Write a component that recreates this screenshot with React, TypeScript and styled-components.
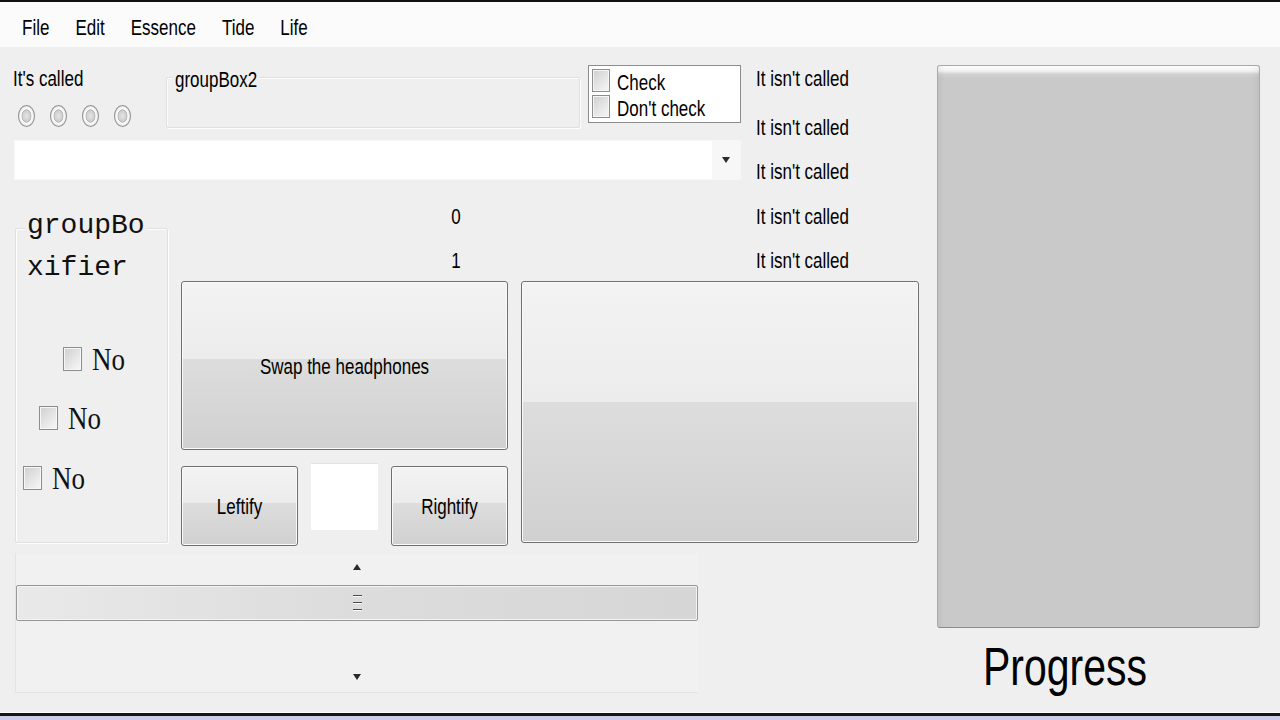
import React from "react";
import styled, { createGlobalStyle } from "styled-components";

const SANS = `"Liberation Sans", Arial, sans-serif`;
const SERIF = `"Liberation Serif", "Times New Roman", serif`;
const MONO = `"Liberation Mono", "Courier New", monospace`;

const Global = createGlobalStyle`
  html, body { margin: 0; padding: 0; background: #efefef; }
  body { width: 1280px; height: 720px; overflow: hidden; font-family: ${SANS}; color: #000; }
  *, *::before, *::after { box-sizing: border-box; }
`;

const Caption = styled.span<{ $size?: number; $stretch?: number }>`
  display: inline-block;
  font-family: ${SANS};
  font-size: ${(p) => p.$size ?? 17}px;
  line-height: ${(p) => Math.round((p.$size ?? 17) * 1.18)}px;
  transform: scaleY(${(p) => p.$stretch ?? 1.28});
  white-space: nowrap;
  color: #000;
`;

const Window = styled.div`
  width: 1280px;
  height: 720px;
  display: flex;
  flex-direction: column;
  border-top: 2px solid #101010;
  background: #efefef;
`;

const MenuBar = styled.nav`
  height: 45px;
  flex: none;
  display: flex;
  align-items: flex-start;
  padding: 17px 0 0 9px;
  background: #fbfbfb;
`;

const MenuItem = styled(Caption)`
  padding: 0 13px;
`;

const Main = styled.main`
  flex: 1;
  display: flex;
  align-items: flex-start;
  padding: 15px 0 0 13px;
  background: #efefef;
  box-shadow: inset 0 -1px 0 #fdfdfd;
`;

const Work = styled.div`
  width: 906px;
  flex: none;
  display: flex;
  flex-direction: column;
`;

const Header = styled.div`
  height: 118px;
  display: flex;
  gap: 15px;
`;

const Controls = styled.div`
  width: 728px;
  display: flex;
  flex-direction: column;
`;

const TopRow = styled.div`
  height: 70px;
  display: flex;
  align-items: flex-start;
`;

const Called = styled.div`
  width: 153px;
  padding-top: 8px;
  display: flex;
  flex-direction: column;
  align-items: flex-start;
`;

const RadioRow = styled.div`
  display: flex;
  gap: 15px;
  padding-left: 5px;
  margin-top: 15px;
`;

const Radio = styled.span`
  width: 17px;
  height: 22px;
  border-radius: 50%;
  border: 1px solid #8f8f8f;
  background: radial-gradient(
    closest-side,
    #e6e6e6 0%,
    #cfcfcf 50%,
    #b5b5b5 62%,
    #fbfbfb 70%,
    #ececec 100%
  );
`;

const GroupFrame = styled.div<{ $w: number; $h: number; $top: number; $left?: number }>`
  width: ${(p) => p.$w}px;
  height: ${(p) => p.$h}px;
  margin-top: ${(p) => p.$top}px;
  margin-left: ${(p) => p.$left ?? 0}px;
  flex: none;
  display: flex;
  flex-direction: column;
  align-items: flex-start;
  border: 1px solid #e0e0e0;
  border-radius: 2px;
  box-shadow: inset 1px 1px 0 #fdfdfd, 1px 1px 0 #fdfdfd;
`;

const GroupTitle = styled.div<{ $lift: number; $x: number }>`
  margin-top: -${(p) => p.$lift}px;
  margin-left: ${(p) => p.$x}px;
  padding: 0 2px;
  background: #efefef;
`;

const MonoTitle = styled.div`
  font-family: ${MONO};
  font-size: 28px;
  line-height: 42px;
  white-space: pre;
  color: #111;
`;

const CheckList = styled.div`
  width: 153px;
  height: 58px;
  margin: 3px 0 0 8px;
  padding: 1px 3px;
  flex: none;
  display: flex;
  flex-direction: column;
  background: #fff;
  border: 1px solid #8c8c8c;
`;

const ListItem = styled.div`
  height: 26px;
  display: flex;
  align-items: center;
  gap: 7px;
`;

const ItemText = styled(Caption)`
  padding-top: 6px;
`;

const CheckBox = styled.span<{ $w?: number; $h?: number }>`
  width: ${(p) => p.$w ?? 18}px;
  height: ${(p) => p.$h ?? 23}px;
  flex: none;
  border: 1px solid #8e8e8e;
  box-shadow: inset 0 0 0 1px #f6f6f6;
  background: linear-gradient(135deg, #cfcfcf 0%, #e6e6e6 55%, #f7f7f7 100%);
`;

const ComboBox = styled.div`
  width: 727px;
  height: 40px;
  margin: 8px 0 0 1px;
  display: flex;
  justify-content: flex-end;
  background: #fff;
  border: 1px solid #f6f6f6;
`;

const DropButton = styled.span`
  width: 28px;
  display: flex;
  align-items: center;
  justify-content: center;
  background: #f7f7f7;
`;

const Triangle = styled.span<{ $up?: boolean }>`
  width: 0;
  height: 0;
  border-left: 4px solid transparent;
  border-right: 4px solid transparent;
  ${(p) =>
    p.$up ? "border-bottom: 6px solid #2a2a2a;" : "border-top: 6px solid #2a2a2a;"}
`;

const LabelStack = styled.div`
  display: flex;
  flex-direction: column;
  align-items: flex-start;
  padding-top: 8px;
`;

const SideLabel = styled(Caption)<{ $mt?: number }>`
  margin-top: ${(p) => p.$mt ?? 0}px;
`;

const Body = styled.div`
  display: flex;
  align-items: flex-start;
  margin-top: 8px;
`;

const NoRow = styled.div<{ $indent: number; $mt: number }>`
  height: 24px;
  display: flex;
  align-items: center;
  gap: 10px;
  margin-left: ${(p) => p.$indent}px;
  margin-top: ${(p) => p.$mt}px;
`;

const SerifText = styled.span`
  display: inline-block;
  font-family: ${SERIF};
  font-size: 27px;
  line-height: 30px;
  transform: scaleY(1.17);
  color: #111;
`;

const RightCol = styled.div`
  margin-left: 13px;
  padding-top: 20px;
  display: flex;
  flex-direction: column;
`;

const CounterRow = styled.div<{ $mt?: number }>`
  height: 20px;
  display: flex;
  margin-top: ${(p) => p.$mt ?? 0}px;
`;

const NumberCell = styled.div`
  width: 550px;
  text-align: center;
  margin-right: 25px;
`;

const ButtonsRow = styled.div`
  display: flex;
  align-items: flex-start;
  gap: 13px;
  margin-top: 9px;
`;

const SwapCol = styled.div`
  width: 327px;
  display: flex;
  flex-direction: column;
`;

const WinButton = styled.button<{ $w?: number; $h: number; $mt?: number }>`
  width: ${(p) => (p.$w ? `${p.$w}px` : "100%")};
  height: ${(p) => p.$h}px;
  margin: ${(p) => p.$mt ?? 0}px 0 0;
  padding: 4px 0 0;
  flex: none;
  display: flex;
  align-items: center;
  justify-content: center;
  border: 1px solid #707070;
  border-radius: 3px;
  box-shadow: inset 0 0 0 1px #fafafa;
  background: linear-gradient(
    to bottom,
    #f3f3f3 0%,
    #ececec 46%,
    #dddddd 46%,
    #d0d0d0 100%
  );
  font-family: ${SANS};
  color: #000;
`;

const SmallRow = styled.div`
  height: 83px;
  margin-top: 13px;
  display: flex;
  justify-content: space-between;
  align-items: flex-start;
`;

const TextBox = styled.div`
  width: 67px;
  height: 67px;
  background: #fff;
  border-top: 1px solid #e2e2e2;
`;

const ScrollBar = styled.div`
  width: 683px;
  height: 140px;
  margin: 7px 0 0 2px;
  display: flex;
  flex-direction: column;
  background: #f1f1f1;
  border-left: 1px solid #e3e3e3;
  border-bottom: 1px solid #e3e3e3;
`;

const ArrowCell = styled.div<{ $h: number; $end?: boolean }>`
  height: ${(p) => p.$h}px;
  margin-top: ${(p) => (p.$end ? "auto" : "0")};
  display: flex;
  align-items: center;
  justify-content: center;
`;

const Thumb = styled.div`
  height: 36px;
  margin-top: 4px;
  display: flex;
  align-items: center;
  justify-content: center;
  border: 1px solid #979797;
  border-radius: 2px;
  box-shadow: inset 0 0 0 1px #f4f4f4;
  background: linear-gradient(to right, #e9e9e9 0%, #dddddd 45%, #d6d6d6 100%);
`;

const Grip = styled.span`
  display: flex;
  flex-direction: column;
  gap: 5px;
`;

const GripLine = styled.span`
  width: 9px;
  height: 2px;
  border-top: 1px solid #4a4a4a;
  border-bottom: 1px solid #fbfbfb;
`;

const ProgressCol = styled.div`
  width: 323px;
  margin: 3px 0 0 18px;
  display: flex;
  flex-direction: column;
  align-items: flex-start;
`;

const ProgressBar = styled.div`
  width: 323px;
  height: 563px;
  border: 1px solid #a9a9a9;
  border-bottom-color: #8c8c8c;
  border-radius: 3px;
  background: linear-gradient(
    to bottom,
    #fdfdfd 0px,
    #f1f1f1 5px,
    #d2d2d2 8px,
    #c9c9c9 12px,
    #c9c9c9 100%
  );
  box-shadow: inset 7px 0 6px -5px rgba(0, 0, 0, 0.06),
    inset -7px 0 6px -5px rgba(0, 0, 0, 0.06);
`;

const ProgressLabel = styled(Caption)`
  margin: 15px 0 0 46px;
`;

const Footer = styled.footer`
  height: 7px;
  flex: none;
  border-top: 3px solid #141414;
  background: #c9cde8;
`;

const menus = ["File", "Edit", "Essence", "Tide", "Life"];
const noRows = [
  { indent: 47, mt: 58 },
  { indent: 23, mt: 35 },
  { indent: 7, mt: 36 },
];

export default function App() {
  return (
    <>
      <Global />
      <Window>
        <MenuBar>
          {menus.map((m) => (
            <MenuItem key={m}>{m}</MenuItem>
          ))}
        </MenuBar>

        <Main>
          <Work>
            <Header>
              <Controls>
                <TopRow>
                  <Called>
                    <Caption>It's called</Caption>
                    <RadioRow>
                      <Radio />
                      <Radio />
                      <Radio />
                      <Radio />
                    </RadioRow>
                  </Called>

                  <GroupFrame $w={414} $h={51} $top={15}>
                    <GroupTitle $lift={7} $x={6}>
                      <Caption>groupBox2</Caption>
                    </GroupTitle>
                  </GroupFrame>

                  <CheckList>
                    <ListItem>
                      <CheckBox />
                      <ItemText>Check</ItemText>
                    </ListItem>
                    <ListItem>
                      <CheckBox />
                      <ItemText>Don't check</ItemText>
                    </ListItem>
                  </CheckList>
                </TopRow>

                <ComboBox>
                  <DropButton>
                    <Triangle />
                  </DropButton>
                </ComboBox>
              </Controls>

              <LabelStack>
                <SideLabel>It isn't called</SideLabel>
                <SideLabel $mt={29}>It isn't called</SideLabel>
                <SideLabel $mt={24}>It isn't called</SideLabel>
              </LabelStack>
            </Header>

            <Body>
              <GroupFrame $w={153} $h={315} $top={40} $left={2}>
                <GroupTitle $lift={24} $x={9}>
                  <MonoTitle>{"groupBo\nxifier"}</MonoTitle>
                </GroupTitle>
                {noRows.map((r, i) => (
                  <NoRow key={i} $indent={r.indent} $mt={r.mt}>
                    <CheckBox $w={19} $h={24} />
                    <SerifText>No</SerifText>
                  </NoRow>
                ))}
              </GroupFrame>

              <RightCol>
                <CounterRow>
                  <NumberCell>
                    <Caption>0</Caption>
                  </NumberCell>
                  <Caption>It isn't called</Caption>
                </CounterRow>
                <CounterRow $mt={24}>
                  <NumberCell>
                    <Caption>1</Caption>
                  </NumberCell>
                  <Caption>It isn't called</Caption>
                </CounterRow>

                <ButtonsRow>
                  <SwapCol>
                    <WinButton $h={169}>
                      <Caption>Swap the headphones</Caption>
                    </WinButton>
                    <SmallRow>
                      <WinButton $w={117} $h={80} $mt={3}>
                        <Caption>Leftify</Caption>
                      </WinButton>
                      <TextBox />
                      <WinButton $w={117} $h={80} $mt={3}>
                        <Caption>Rightify</Caption>
                      </WinButton>
                    </SmallRow>
                  </SwapCol>
                  <WinButton $w={398} $h={262} />
                </ButtonsRow>
              </RightCol>
            </Body>

            <ScrollBar>
              <ArrowCell $h={28}>
                <Triangle $up />
              </ArrowCell>
              <Thumb>
                <Grip>
                  <GripLine />
                  <GripLine />
                  <GripLine />
                </Grip>
              </Thumb>
              <ArrowCell $h={30} $end>
                <Triangle />
              </ArrowCell>
            </ScrollBar>
          </Work>

          <ProgressCol>
            <ProgressBar />
            <ProgressLabel $size={41} $stretch={1.3}>
              Progress
            </ProgressLabel>
          </ProgressCol>
        </Main>

        <Footer />
      </Window>
    </>
  );
}
